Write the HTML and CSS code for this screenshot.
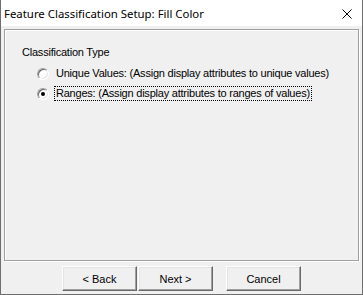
FILE: index.html
```html
<!DOCTYPE html>
<html lang="en">
<head>
  <meta charset="UTF-8" />
  <title>Feature Classification Setup: Fill Color</title>
  <link rel="stylesheet" href="styles.css">
</head>
<body>
  <div class="window">
    <div class="titlebar">
      <span class="title">Feature Classification Setup: Fill Color</span>
      <svg class="close" width="10" height="10" viewBox="0 0 10 10">
        <path d="M0.5 0.5 L9.5 9.5 M9.5 0.5 L0.5 9.5" stroke="#000" stroke-width="1" fill="none" />
      </svg>
    </div>
    <div class="body">
      <div class="panel">
        <div class="group-label">Classification Type</div>
        <label class="radio">
          <span class="dot"></span>
          <span class="text">Unique Values: (Assign display attributes to unique values)</span>
        </label>
        <label class="radio checked">
          <span class="dot"></span>
          <span class="text focus">Ranges: (Assign display attributes to ranges of values)</span>
        </label>
      </div>
      <div class="buttons">
        <button class="btn">&lt; Back</button>
        <button class="btn">Next &gt;</button>
        <button class="btn cancel">Cancel</button>
      </div>
    </div>
  </div>
</body>
</html>
```

FILE: styles.css
```css
body {
  margin: 0;
  background: #3a4a6a;
}
.window {
  width: 363px;
  height: 295px;
  box-sizing: border-box;
  background: #f0f0f0;
  border: 1px solid #6e6e6e;
  border-top: none;
  display: flex;
  flex-direction: column;
}
.titlebar {
  height: 26px;
  flex-shrink: 0;
  background: #fff;
  display: flex;
  align-items: center;
  justify-content: space-between;
  padding: 0 10px 0 3px;
  font-family: "Noto Sans", sans-serif;
  font-size: 11.4px;
  color: #000;
}
.close {
  display: block;
  margin-top: 1px;
}
.body {
  flex: 1;
  padding: 3px 3px 0 3px;
  display: flex;
  flex-direction: column;
  font-family: "Liberation Sans", Arial, sans-serif;
  font-size: 11px;
  letter-spacing: -0.22px;
  color: #000;
}
.panel {
  height: 232px;
  box-sizing: border-box;
  flex-shrink: 0;
  border: 1px solid #a0a0a0;
  box-shadow: inset 1px 1px #fff, 1px 1px #fff;
  padding: 16px 0 0 17px;
  display: flex;
  flex-direction: column;
}
.group-label {
  line-height: 13px;
}
.radio {
  display: flex;
  align-items: center;
  gap: 5px;
  margin-left: 15px;
  height: 13px;
  margin-top: 8px;
}
.radio + .radio {
  margin-top: 7px;
}
.dot {
  width: 12px;
  height: 12px;
  box-sizing: border-box;
  border-radius: 50%;
  background: #fff;
  border: 1px solid;
  border-color: #a0a0a0 #fff #fff #a0a0a0;
  box-shadow: inset 1px 1px #696969, inset -1px -1px #e3e3e3;
  position: relative;
}
.checked .dot::after {
  content: "";
  position: absolute;
  left: 3px;
  top: 3px;
  width: 4px;
  height: 4px;
  border-radius: 50%;
  background: #000;
}
.text {
  line-height: 13px;
  padding: 0 1px;
  border: 1px solid transparent;
}
.focus {
  border: 1px dotted #000;
}
.buttons {
  display: flex;
  margin-top: 5px;
  padding-left: 58px;
}
.btn {
  width: 75px;
  height: 25px;
  box-sizing: border-box;
  font-family: "Liberation Sans", Arial, sans-serif;
  font-size: 11px;
  color: #000;
  background: #f0f0f0;
  border: 1px solid;
  border-color: #fff #696969 #696969 #fff;
  box-shadow: inset -1px -1px #a0a0a0, inset 1px 1px #e3e3e3;
  padding: 0;
  margin-right: 1px;
}
.cancel {
  margin-left: 12px;
}
```
